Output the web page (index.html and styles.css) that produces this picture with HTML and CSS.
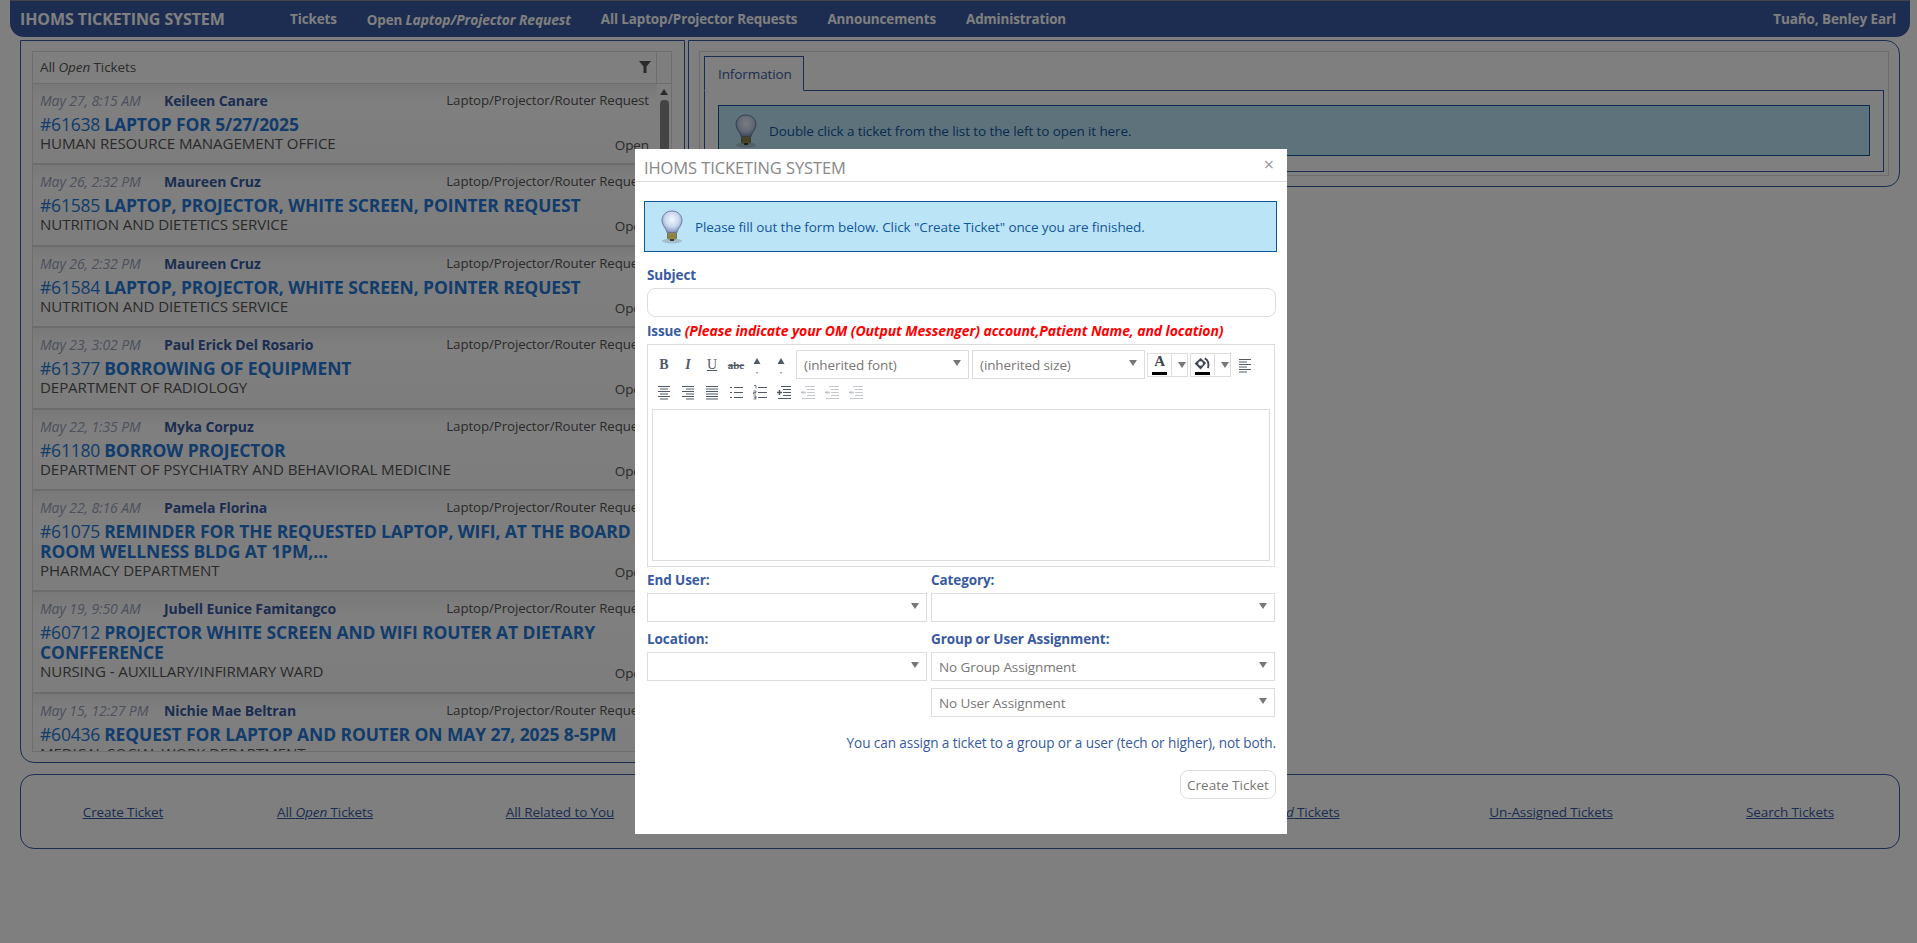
FILE: index.html
```html
<!DOCTYPE html>
<html lang="en">
<head>
  <meta charset="UTF-8">
  <title>IHOMS Ticketing System</title>
  <link rel="stylesheet" href="styles.css">
</head>
<body>
  <svg class="sprites" width="0" height="0">
    <defs>
      <radialGradient id="bulb-glass" cx="50%" cy="38%" r="60%">
        <stop offset="0" stop-color="#f4f8fd"/>
        <stop offset="0.6" stop-color="#c6d6ee"/>
        <stop offset="1" stop-color="#7f8fb8"/>
      </radialGradient>
      <symbol id="bulb" viewBox="0 0 24 34">
        <ellipse cx="12" cy="31" rx="10" ry="2.500" fill="#8a97a5" opacity=".5"/>
        <path d="M12 1C5.800 1 2 5.500 2 10.500c0 5 4 7 5.300 12.500h9.400C18 17.500 22 15.500 22 10.500 22 5.500 18.200 1 12 1z" fill="url(#bulb-glass)" stroke="#6f7fa8" stroke-width="1"/>
        <rect x="7.500" y="23" width="9" height="6" rx="1" fill="#b7a75a" stroke="#5d5a36" stroke-width=".8"/>
        <path d="M8 25h8M8 27h8" stroke="#4e4c30" stroke-width=".8"/>
        <rect x="10" y="29" width="4" height="2" fill="#3e3d2a"/>
      </symbol>
      <symbol id="ic-left" viewBox="0 0 16 16"><path d="M2 2.500h12M2 5h8M2 7.500h12M2 10h8M2 12.500h12M2 15h8" stroke="currentColor"/></symbol>
      <symbol id="ic-center" viewBox="0 0 16 16"><path d="M2 2.500h12M4 5h8M2 7.500h12M4 10h8M2 12.500h12M4 15h8" stroke="currentColor"/></symbol>
      <symbol id="ic-right" viewBox="0 0 16 16"><path d="M2 2.500h12M6 5h8M2 7.500h12M6 10h8M2 12.500h12M6 15h8" stroke="currentColor"/></symbol>
      <symbol id="ic-justify" viewBox="0 0 16 16"><path d="M2 2.500h12M2 5h12M2 7.500h12M2 10h12M2 12.500h12M2 15h12" stroke="currentColor"/></symbol>
      <symbol id="ic-ul" viewBox="0 0 16 16"><path d="M6 3.500h9M6 8.500h9M6 13.500h9" stroke="currentColor"/><path d="M2 3h2v1H2zM2 8h2v1H2zM2 13h2v1H2z" fill="currentColor"/></symbol>
      <symbol id="ic-ol" viewBox="0 0 16 16"><path d="M6 3.500h9M6 8.500h9M6 13.500h9" stroke="currentColor"/><path d="M2 1.500h2v3M1.500 7h2.500v1.500h-2.500v1.500h2.500M1.500 12h2.500v1.500h-1.500h1.500v1.500h-2.500" fill="none" stroke="currentColor" stroke-width=".8"/></symbol>
      <symbol id="ic-indent" viewBox="0 0 16 16"><path d="M5 2.500h10M7 5.500h8M7 8.500h8M7 11.500h8M2 14.500h13" stroke="currentColor"/><path d="M1 8.500h5" stroke="currentColor" stroke-width="1.500"/><path d="M3.500 6v5" stroke="currentColor" stroke-width="1.500"/></symbol>
      <symbol id="ic-outdent" viewBox="0 0 16 16"><path d="M5 2.500h10M7 5.500h8M7 8.500h8M7 11.500h8M2 14.500h13" stroke="currentColor"/><path d="M1 8.500h5" stroke="currentColor" stroke-width="1.500"/><path d="M3.500 6.500L1 8.500l2.500 2z" fill="currentColor"/></symbol>
      <symbol id="ic-grow" viewBox="0 0 16 20"><path d="M8 3l3.500 6h-7z" fill="currentColor"/><rect x="7.500" y="17" width="1" height="1.500" fill="currentColor"/></symbol>
      <symbol id="ic-fill" viewBox="0 0 18 14"><path d="M7.500 1l6 5.500-6 7-6.500-6.500z" fill="currentColor"/><circle cx="7.500" cy="7" r="2.500" fill="#fff"/><path d="M12 1.500c4 2 4.500 6 3.500 10.500" fill="none" stroke="currentColor" stroke-width="2"/></symbol>
      <symbol id="ic-filter" viewBox="0 0 12 12"><path d="M0 0h12L7.500 5.500V12h-3V5.500z" fill="currentColor"/></symbol>
    </defs>
  </svg>

  <div class="page">
    <nav class="topbar">
      <span class="brand">IHOMS TICKETING SYSTEM</span>
      <a class="nav-link">Tickets</a>
      <a class="nav-link">Open <em>Laptop/Projector Request</em></a>
      <a class="nav-link">All Laptop/Projector Requests</a>
      <a class="nav-link">Announcements</a>
      <a class="nav-link">Administration</a>
      <span class="nav-user">Tuaño, Benley Earl</span>
    </nav>

    <div class="main">
      <section class="panel panel-list">
        <div class="list-box">
          <div class="list-head">
            <span class="list-title">All <em>Open</em> Tickets</span>
            <span class="list-filter"><svg width="12" height="12"><use href="#ic-filter"/></svg></span>
          </div>
          <div class="list-wrap">
            <div class="rows">
              <article class="row">
                <div class="row-meta"><span class="row-date">May 27, 8:15 AM</span><span class="row-name">Keileen Canare</span><span class="row-cat">Laptop/Projector/Router Request</span></div>
                <div class="row-title"><span class="row-num">#61638</span><b>LAPTOP FOR 5/27/2025</b></div>
                <div class="row-foot"><span class="row-dept">HUMAN RESOURCE MANAGEMENT OFFICE</span><span class="row-status">Open</span></div>
              </article>
              <article class="row">
                <div class="row-meta"><span class="row-date">May 26, 2:32 PM</span><span class="row-name">Maureen Cruz</span><span class="row-cat">Laptop/Projector/Router Request</span></div>
                <div class="row-title"><span class="row-num">#61585</span><b>LAPTOP, PROJECTOR, WHITE SCREEN, POINTER REQUEST</b></div>
                <div class="row-foot"><span class="row-dept">NUTRITION AND DIETETICS SERVICE</span><span class="row-status">Open</span></div>
              </article>
              <article class="row">
                <div class="row-meta"><span class="row-date">May 26, 2:32 PM</span><span class="row-name">Maureen Cruz</span><span class="row-cat">Laptop/Projector/Router Request</span></div>
                <div class="row-title"><span class="row-num">#61584</span><b>LAPTOP, PROJECTOR, WHITE SCREEN, POINTER REQUEST</b></div>
                <div class="row-foot"><span class="row-dept">NUTRITION AND DIETETICS SERVICE</span><span class="row-status">Open</span></div>
              </article>
              <article class="row">
                <div class="row-meta"><span class="row-date">May 23, 3:02 PM</span><span class="row-name">Paul Erick Del Rosario</span><span class="row-cat">Laptop/Projector/Router Request</span></div>
                <div class="row-title"><span class="row-num">#61377</span><b>BORROWING OF EQUIPMENT</b></div>
                <div class="row-foot"><span class="row-dept">DEPARTMENT OF RADIOLOGY</span><span class="row-status">Open</span></div>
              </article>
              <article class="row">
                <div class="row-meta"><span class="row-date">May 22, 1:35 PM</span><span class="row-name">Myka Corpuz</span><span class="row-cat">Laptop/Projector/Router Request</span></div>
                <div class="row-title"><span class="row-num">#61180</span><b>BORROW PROJECTOR</b></div>
                <div class="row-foot"><span class="row-dept">DEPARTMENT OF PSYCHIATRY AND BEHAVIORAL MEDICINE</span><span class="row-status">Open</span></div>
              </article>
              <article class="row">
                <div class="row-meta"><span class="row-date">May 22, 8:16 AM</span><span class="row-name">Pamela Florina</span><span class="row-cat">Laptop/Projector/Router Request</span></div>
                <div class="row-title"><span class="row-num">#61075</span><b>REMINDER FOR THE REQUESTED LAPTOP, WIFI, AT THE BOARD ROOM WELLNESS BLDG AT 1PM,...</b></div>
                <div class="row-foot"><span class="row-dept">PHARMACY DEPARTMENT</span><span class="row-status">Open</span></div>
              </article>
              <article class="row">
                <div class="row-meta"><span class="row-date">May 19, 9:50 AM</span><span class="row-name">Jubell Eunice Famitangco</span><span class="row-cat">Laptop/Projector/Router Request</span></div>
                <div class="row-title"><span class="row-num">#60712</span><b>PROJECTOR WHITE SCREEN AND WIFI ROUTER AT DIETARY CONFFERENCE</b></div>
                <div class="row-foot"><span class="row-dept">NURSING - AUXILLARY/INFIRMARY WARD</span><span class="row-status">Open</span></div>
              </article>
              <article class="row">
                <div class="row-meta"><span class="row-date">May 15, 12:27 PM</span><span class="row-name">Nichie Mae Beltran</span><span class="row-cat">Laptop/Projector/Router Request</span></div>
                <div class="row-title"><span class="row-num">#60436</span><b>REQUEST FOR LAPTOP AND ROUTER ON MAY 27, 2025 8-5PM</b></div>
                <div class="row-foot"><span class="row-dept">MEDICAL SOCIAL WORK DEPARTMENT</span><span class="row-status">Open</span></div>
              </article>
            </div>
            <div class="scrollbar">
              <span class="scroll-up"></span>
              <span class="scroll-thumb"></span>
            </div>
          </div>
        </div>
      </section>

      <section class="panel panel-info">
        <div class="tabs-box">
          <div class="tabs"><span class="tab">Information</span></div>
          <div class="tab-pane">
            <div class="info-box">
              <svg class="bulb" width="24" height="34"><use href="#bulb"/></svg>
              <span>Double click a ticket from the list to the left to open it here.</span>
            </div>
          </div>
        </div>
      </section>
    </div>

    <div class="panel panel-links">
      <a>Create Ticket</a>
      <a>All <em>Open</em> Tickets</a>
      <a>All Related to You</a>
      <a>Assigned to You</a>
      <a>All <em>Closed</em> Tickets</a>
      <a>Un-Assigned Tickets</a>
      <a>Search Tickets</a>
    </div>
  </div>

  <div class="backdrop"></div>

  <div class="modal">
    <div class="modal-head">
      <span class="modal-title">IHOMS TICKETING SYSTEM</span>
      <span class="modal-close">×</span>
    </div>
    <div class="modal-body">
      <div class="info-box">
        <svg class="bulb" width="24" height="34"><use href="#bulb"/></svg>
        <span>Please fill out the form below. Click "Create Ticket" once you are finished.</span>
      </div>

      <form class="ticket-form">
        <label class="field-label">Subject</label>
        <div class="text-input"></div>

        <label class="field-label issue-label">Issue <em>(Please indicate your OM (Output Messenger) account,Patient Name, and location)</em></label>
        <div class="editor">
          <div class="toolbar">
            <div class="tool-row">
              <span class="tool tool-b">B</span>
              <span class="tool tool-i">I</span>
              <span class="tool tool-u">U</span>
              <span class="tool tool-s">abc</span>
              <span class="tool tool-n"><svg width="16" height="20"><use href="#ic-grow"/></svg></span>
              <span class="tool tool-n"><svg width="16" height="20"><use href="#ic-grow"/></svg></span>
              <span class="combo combo-tool"><span>(inherited font)</span><i class="caret"></i></span>
              <span class="combo combo-tool"><span>(inherited size)</span><i class="caret"></i></span>
              <span class="color-btn"><span class="color-a">A</span><i class="caret"></i></span>
              <span class="color-btn"><span class="color-a"><svg width="18" height="14"><use href="#ic-fill"/></svg></span><i class="caret"></i></span>
              <span class="tool tool-last"><svg width="16" height="16"><use href="#ic-left"/></svg></span>
            </div>
            <div class="tool-row tool-row-2">
              <span class="tool"><svg width="16" height="16"><use href="#ic-center"/></svg></span>
              <span class="tool"><svg width="16" height="16"><use href="#ic-right"/></svg></span>
              <span class="tool"><svg width="16" height="16"><use href="#ic-justify"/></svg></span>
              <span class="tool"><svg width="16" height="16"><use href="#ic-ul"/></svg></span>
              <span class="tool"><svg width="16" height="16"><use href="#ic-ol"/></svg></span>
              <span class="tool"><svg width="16" height="16"><use href="#ic-indent"/></svg></span>
              <span class="tool tool-off"><svg width="16" height="16"><use href="#ic-outdent"/></svg></span>
              <span class="tool tool-off"><svg width="16" height="16"><use href="#ic-outdent"/></svg></span>
              <span class="tool tool-off"><svg width="16" height="16"><use href="#ic-outdent"/></svg></span>
            </div>
          </div>
          <div class="editor-area"></div>
        </div>

        <div class="form-grid">
          <div>
            <label class="field-label">End User:</label>
            <div class="combo"><span></span><i class="caret"></i></div>
          </div>
          <div>
            <label class="field-label">Category:</label>
            <div class="combo"><span></span><i class="caret"></i></div>
          </div>
          <div>
            <label class="field-label">Location:</label>
            <div class="combo"><span></span><i class="caret"></i></div>
          </div>
          <div>
            <label class="field-label">Group or User Assignment:</label>
            <div class="combo"><span>No Group Assignment</span><i class="caret"></i></div>
            <div class="combo combo-next"><span>No User Assignment</span><i class="caret"></i></div>
          </div>
        </div>

        <p class="form-note">You can assign a ticket to a group or a user (tech or higher), not both.</p>
        <div class="form-actions"><button type="button" class="btn-create">Create Ticket</button></div>
      </form>
    </div>
  </div>
</body>
</html>
```

FILE: styles.css
```css
html, body {
  margin: 0;
  height: 100%;
  overflow: hidden;
  background: #fff;
}

body {
  font-family: "Open Sans", "Noto Sans", sans-serif;
  font-size: 13.5px;
  letter-spacing: -0.1px;
  color: #444;
}

.sprites {
  position: absolute;
}

.page {
  width: 1917px;
  height: 943px;
}

/* top bar */
.topbar {
  display: flex;
  align-items: center;
  height: 36px;
  margin: 0 7px 0 10px;
  padding: 0 14px 0 10px;
  box-sizing: content-box;
  border-top: 1px solid #888;
  border-radius: 0 0 14px 14px;
  background: #385aa2;
  color: #fff;
  font-size: 13.4px;
  font-weight: 700;
}

.brand {
  width: 270px;
  font-size: 16px;
}

.nav-link {
  margin-right: 30px;
}

.nav-link em {
  font-size: 13.8px;
}

.nav-user {
  margin-left: auto;
  font-size: 13.5px;
}

/* panels */
.main {
  display: flex;
  align-items: flex-start;
  gap: 3px;
  margin: 3px 17px 0 20px;
}

.panel {
  box-sizing: border-box;
  border: 1px solid #385aa2;
}

.panel-list {
  width: 665px;
  height: 723px;
  padding: 10px 12px 10px 11px;
  border-radius: 0 0 0 14px;
}

.panel-info {
  flex: 1;
  height: 147px;
  padding: 10px;
  border-radius: 0 14px 14px 0;
}

.panel-links {
  display: grid;
  grid-template-columns: 204px 200px 270px 471px 244px 282px 196px;
  align-items: center;
  height: 75px;
  margin: 11px 17px 0 20px;
  border-radius: 14px;
  color: #385aa2;
  text-align: center;
}

.panel-links a {
  text-decoration: underline;
}

/* ticket list */
.list-box {
  height: 100%;
  box-sizing: border-box;
  border: 1px solid #ddd;
  display: flex;
  flex-direction: column;
}

.list-head {
  display: flex;
  height: 31px;
  flex-shrink: 0;
  border-bottom: 1px solid #ddd;
}

.list-title {
  flex: 1;
  padding: 0 8px 0 7px;
  line-height: 31px;
  color: #555;
}

.list-filter {
  width: 26px;
  box-sizing: border-box;
  border-right: 1px solid #ddd;
  color: #555;
  margin-right: 14px;
}

.list-filter svg {
  margin: 9px 0 0 8px;
}

.list-wrap {
  flex: 1;
  display: flex;
  min-height: 0;
}

.rows {
  flex: 1;
  overflow: hidden;
}

.row {
  box-sizing: border-box;
  padding: 7px 8px 10.400px 7px;
  border-bottom: 2px solid #d8d8d8;
  background: linear-gradient(#f1f1f1, #fff 22%, #fafafa);
}

.row-meta {
  display: flex;
  height: 19.500px;
  line-height: 19.500px;
}

.row-date {
  box-sizing: border-box;
  min-width: 124px;
  padding-right: 12px;
  font-size: 14px;
  font-style: italic;
  color: #99a2bb;
}

.row-name {
  font-size: 14px;
  font-weight: 700;
  color: #385aa2;
}

.row-cat {
  margin-left: auto;
  font-size: 13.300px;
  color: #555;
}

.row-title {
  margin-top: 3.500px;
  line-height: 20px;
  font-size: 17.500px;
  color: #2478d8;
}

.row-num {
  margin-right: 4px;
  letter-spacing: -0.2px;
}

.row-foot {
  display: flex;
  justify-content: space-between;
  margin-top: -1px;
  line-height: 20px;
  color: #555;
}

.row-dept {
  font-size: 15.100px;
}

.row-status {
  position: relative;
  top: 2px;
}

.scrollbar {
  width: 14px;
  display: flex;
  flex-direction: column;
  align-items: center;
  flex-shrink: 0;
}

.scroll-up {
  margin-top: 5px;
  border: 4px solid transparent;
  border-top: 0;
  border-bottom: 6px solid #555;
}

.scroll-thumb {
  width: 9px;
  height: 90px;
  margin-top: 5px;
  background: #888;
  border-radius: 4px;
}

/* information tab */
.tabs-box {
  height: 100%;
  box-sizing: border-box;
  border: 1px solid #ddd;
  padding: 4px;
}

.tabs {
  display: flex;
  height: 34px;
}

.tab {
  box-sizing: border-box;
  width: 100px;
  height: 35px;
  padding: 8px 0 0 13px;
  border: 1px solid #385aa2;
  border-bottom: 1px solid #fff;
  color: #385aa2;
  position: relative;
}

.tab-pane {
  height: 82px;
  box-sizing: border-box;
  border: 1px solid #385aa2;
  padding: 14px 13px;
}

.info-box {
  display: flex;
  align-items: center;
  gap: 11px;
  height: 51px;
  box-sizing: border-box;
  padding: 0 15px;
  background: #bce4f7;
  border: 1px solid #10569c;
  color: #10569c;
}

/* dialog */
.backdrop {
  position: fixed;
  inset: 0;
  background: rgba(0, 0, 0, 0.5);
}

.modal {
  position: absolute;
  left: 635px;
  top: 149px;
  width: 652px;
  height: 685px;
  background: #fff;
}

.modal-head {
  display: flex;
  justify-content: space-between;
  height: 32px;
  padding: 0 13px 0 9px;
  border-bottom: 1px solid #ddd;
}

.modal-title {
  font-size: 16.500px;
  line-height: 37px;
  color: #888;
}

.modal-close {
  font-size: 18px;
  line-height: 30px;
  color: #999;
}

.modal-body {
  padding: 19px 10px 0 9px;
}

.ticket-form {
  padding: 0 1px 0 3px;
}

.field-label {
  display: block;
  line-height: 18px;
  font-weight: 700;
  color: #385aa2;
}

.ticket-form > .field-label:first-child {
  margin-top: 14px;
}

.text-input {
  height: 29px;
  margin-top: 4px;
  box-sizing: border-box;
  border: 1px solid #ddd;
  border-radius: 8px;
}

.issue-label {
  margin-top: 5px;
}

.issue-label em {
  font-size: 14px;
  color: #f00;
}

.editor {
  box-sizing: border-box;
  height: 223px;
  margin: 4px 1px 0 0;
  padding: 5px 4px 4px;
  border: 1px solid #ddd;
}

.toolbar {
  height: 59px;
}

.tool-row {
  display: flex;
  align-items: center;
  height: 29px;
}

.tool-row-2 {
  height: 25px;
}

.tool {
  width: 24px;
  text-align: center;
  flex-shrink: 0;
  color: #515967;
  font: 700 14px "Liberation Serif", serif;
  letter-spacing: 0;
}

.tool svg {
  display: block;
  margin: 0 auto;
}

.tool-i {
  font-style: italic;
}

.tool-u {
  text-decoration: underline;
  font-weight: 400;
}

.tool-s {
  font-size: 11px;
  text-decoration: line-through;
}

.tool-n {
  position: relative;
  left: -3px;
}

.tool-off {
  color: #c4c8cd;
}

.tool-last {
  margin-left: 2px;
}

.combo {
  display: flex;
  justify-content: space-between;
  box-sizing: border-box;
  height: 29px;
  margin-top: 4px;
  padding: 0 7px;
  border: 1px solid #ddd;
  line-height: 28px;
  color: #777;
}

.combo-tool {
  flex: 0 0 173px;
  margin: 0;
}

.combo-tool + .combo-tool {
  margin-left: 3px;
}

.caret {
  margin-top: 9px;
  width: 0;
  height: 0;
  border: 4px solid transparent;
  border-top: 6px solid #777;
  border-bottom: 0;
}

.color-btn {
  display: flex;
  box-sizing: border-box;
  align-items: center;
  width: 41px;
  height: 24px;
  margin-left: 2px;
  padding-left: 3px;
  border: 1px solid #ddd;
}

.color-btn .caret {
  margin: 0 0 0 6px;
}

.color-a {
  box-sizing: border-box;
  width: 21px;
  height: 21px;
  border-right: 1px solid #ddd;
  padding-right: 3px;
  font: 700 15px/15px "Liberation Serif", serif;
  color: #3f4652;
  text-align: center;
  position: relative;
}

.color-a svg {
  display: block;
  margin: 3px 0 0 -1px;
  width: 18px;
  height: 13px;
}

.color-a::after {
  content: "";
  position: absolute;
  left: 1px;
  right: 4px;
  bottom: 0;
  height: 3px;
  background: #000;
}

.editor-area {
  height: 152px;
  box-sizing: border-box;
  border: 1px solid #ddd;
}

.form-grid {
  display: grid;
  grid-template-columns: 280px 344px;
  column-gap: 4px;
  margin-top: 4px;
  row-gap: 8px;
}

.form-grid .combo {
  margin-top: 4px;
}

.form-grid .combo-next {
  margin-top: 7px;
}

.form-note {
  margin: 17px 0 0;
  line-height: 18px;
  font-size: 13.600px;
  color: #385aa2;
  text-align: right;
}

.form-actions {
  display: flex;
  justify-content: flex-end;
  margin-top: 18px;
}

.btn-create {
  width: 96px;
  height: 29px;
  padding: 0;
  border: 1px solid #ddd;
  border-radius: 8px;
  background: #fff;
  color: #777;
  font: inherit;
}
```
